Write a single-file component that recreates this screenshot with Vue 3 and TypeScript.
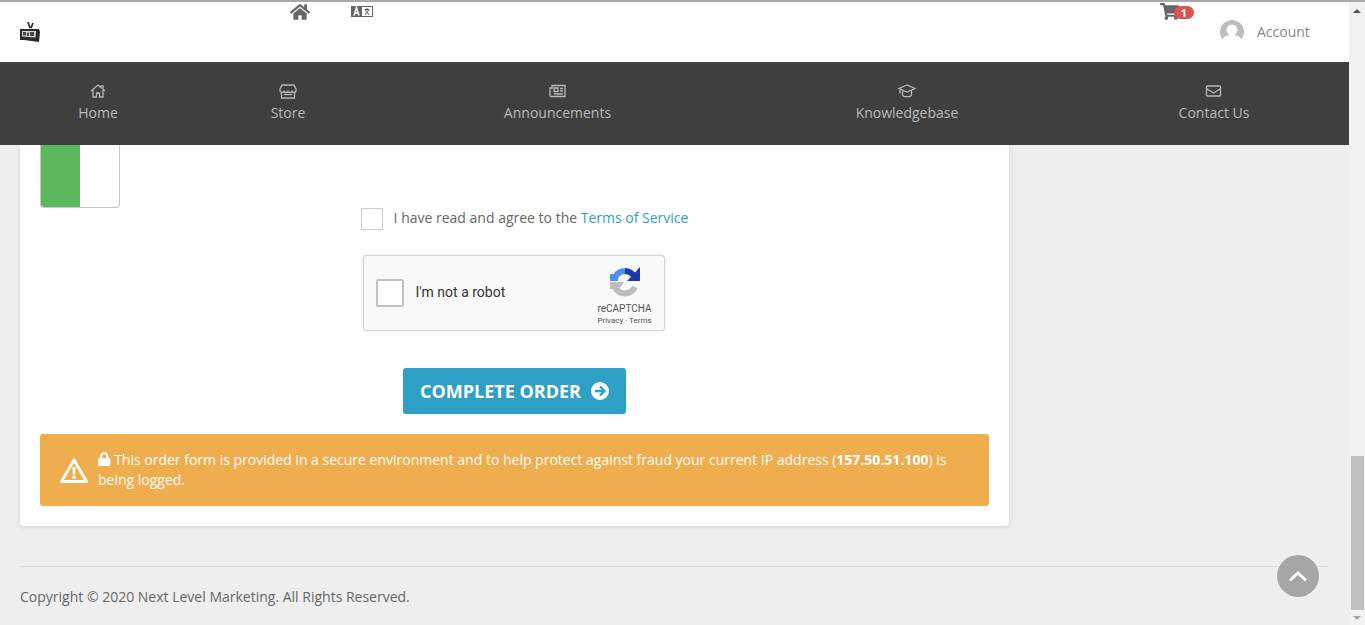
<script setup lang="ts">
interface NavItem { label: string; paths: string[] }
const navItems: NavItem[] = [
  { label: 'Home', paths: ['M2 8 9 2l3 2.600V3h2v3.300L16 8', 'M4 7v7h3.500v-4h3v4H14V7'] },
  { label: 'Store', paths: ['M3 2h12l2 4v1.500a2 2 0 0 1-4 0 2 2 0 0 1-4 0 2 2 0 0 1-4 0 2 2 0 0 1-4 0V6z', 'M2.500 9v6h13V9', 'M5 11.500h8'] },
  { label: 'Announcements', paths: ['M3 2.500h13v11H2a1 1 0 0 1-1-1V5h2z', 'M5 5h4v3.500H5z', 'M11 5.500h3M11 8h3M5 11h9'] },
  { label: 'Knowledgebase', paths: ['M9 2 1 5.500 9 9l8-3.500z', 'M4.500 7.500v4c0 1.200 2 2.200 4.500 2.200s4.500-1 4.500-2.200v-4', 'M2 6.500v4'] },
  { label: 'Contact Us', paths: ['M2.500 3h12a1 1 0 0 1 1 1v8a1 1 0 0 1-1 1h-12a1 1 0 0 1-1-1V4a1 1 0 0 1 1-1z', 'M1.500 5.500 8.500 10l7-4.500'] },
]
</script>

<template>
  <div class="window">
    <div class="page">
      <header class="header">
        <svg class="logo" viewBox="0 0 20 20" aria-hidden="true">
          <path d="M8 0l2 6M13 1l-2 5" fill="none" stroke="#333" stroke-width="1.800" />
          <path d="M0 7l19 0 1 3-1 10-15-2H0z" fill="#2a2a2a" />
          <path d="M2 9h14l-.5 6.500L2 14.500z" fill="#d8d8d8" />
          <path d="M3 10h3v3.500H3zM7 10.500h2v3.500H7zM10 10h4v4h-4z" fill="#444" />
        </svg>
        <svg class="home-icon" viewBox="0 0 576 512" aria-hidden="true">
          <path d="M280.37 148.26L96 300.11V464a16 16 0 0 0 16 16l112.06-.29a16 16 0 0 0 15.92-16V368a16 16 0 0 1 16-16h64a16 16 0 0 1 16 16v95.64a16 16 0 0 0 16 16.05L464 480a16 16 0 0 0 16-16V300L295.67 148.26a12.19 12.19 0 0 0-15.3 0zM571.6 251.47L488 182.56V44.05a12 12 0 0 0-12-12h-56a12 12 0 0 0-12 12v72.61L318.47 43a48 48 0 0 0-61 0L4.34 251.47a12 12 0 0 0-1.6 16.9l25.5 31A12 12 0 0 0 45.15 301l235.22-193.74a12.19 12.19 0 0 1 15.3 0L530.9 301a12 12 0 0 0 16.9-1.6l25.5-31a12 12 0 0 0-1.7-16.93z" />
        </svg>
        <svg class="lang-icon" viewBox="0 0 22 11" aria-hidden="true">
          <rect x="0.500" y="0.500" width="21" height="10" fill="#fff" stroke="#666" />
          <rect x="0" y="0" width="11" height="11" fill="#666" />
          <path d="M3 9.500l2.500-8 2.500 8M3.800 7h3.400" fill="none" stroke="#fff" stroke-width="1.500" />
          <path d="M13.500 3.500h5M16 2v1.500M14.500 3.500c.5 2.500 2 4 4 5M17.500 3.500c-.5 2.500-1.800 4-3.500 5" fill="none" stroke="#555" stroke-width="1" />
        </svg>
        <div class="spacer"></div>
        <div class="cart">
          <svg class="cart-icon" viewBox="0 0 576 512" aria-hidden="true">
            <path d="M528.12 301.319l47.273-208C578.806 78.301 567.391 64 551.99 64H159.208l-9.166-44.81C147.758 8.021 137.93 0 126.529 0H24C10.745 0 0 10.745 0 24v16c0 13.255 10.745 24 24 24h69.883l70.248 343.435C147.325 417.1 136 435.222 136 456c0 30.928 25.072 56 56 56s56-25.072 56-56c0-15.674-6.447-29.835-16.824-40h209.647C430.447 426.165 424 440.326 424 456c0 30.928 25.072 56 56 56s56-25.072 56-56c0-22.172-12.888-41.332-31.579-50.405l5.517-24.276c3.413-15.018-8.002-29.319-23.403-29.319H218.117l-6.545-32h293.145c11.206 0 20.92-7.754 23.403-18.681z" />
          </svg>
          <span class="badge">1</span>
        </div>
        <div class="account">
          <svg class="avatar" viewBox="0 0 24 24" aria-hidden="true">
            <circle cx="12" cy="12" r="12" fill="#bdbdbd" />
            <circle cx="12" cy="10" r="5.500" fill="#fff" />
            <path d="M2.600 19.500C4 16 8 15 12 15s8 1 9.400 4.500L20 24H4z" fill="#fff" />
          </svg>
          <span>Account</span>
        </div>
      </header>

      <nav class="nav">
        <a v-for="item in navItems" :key="item.label" class="nav-item">
          <svg class="nav-icon" viewBox="0 0 18 16" aria-hidden="true">
            <path v-for="d in item.paths" :key="d" :d="d" />
          </svg>
          <span>{{ item.label }}</span>
        </a>
      </nav>

      <main class="main">
        <section class="card">
          <div class="meter"><div class="meter-fill"></div></div>
          <div class="tos">
            <span class="tos-box"></span>
            <span class="tos-label">I have read and agree to the <a class="link">Terms of Service</a></span>
          </div>
          <div class="captcha">
            <span class="captcha-box"></span>
            <span class="captcha-text">I'm not a robot</span>
            <div class="captcha-brand">
              <svg class="captcha-logo" viewBox="0 0 32 32" aria-hidden="true">
                <path d="M16 5a11 11 0 0 0-9.500 5.500" fill="none" stroke="#4a90f5" stroke-width="6" />
                <path d="M1 8h8v7H1z" fill="#4a90f5" />
                <path d="M16 5a11 11 0 0 1 9 5" fill="none" stroke="#1c3aa9" stroke-width="6" />
                <path d="M31 1v14H18z" fill="#1c3aa9" />
                <path d="M5 16a11 11 0 0 0 21 5" fill="none" stroke="#bdbdbd" stroke-width="6" />
                <path d="M1 16h14l-5 7H1z" fill="#bdbdbd" />
              </svg>
              <span class="captcha-name">reCAPTCHA</span>
              <span class="captcha-links">Privacy · Terms</span>
            </div>
          </div>
          <button class="order" type="button">
            <span>Complete Order</span>
            <svg class="order-icon" viewBox="0 0 18 18" aria-hidden="true">
              <circle cx="9" cy="9" r="9" fill="#fff" />
              <path d="M4 9h9M9 4.500 13.500 9 9 13.500" fill="none" stroke="#2ca0c5" stroke-width="2.400" />
            </svg>
          </button>
          <div class="alert">
            <svg class="alert-icon" viewBox="0 0 28 25" aria-hidden="true">
              <path d="M14 2 1.500 23.500h25z" fill="none" stroke="#fff" stroke-width="2.800" stroke-linejoin="round" />
              <path d="M12.400 9h3.200l-.5 7.500h-2.200z" fill="#fff" />
              <circle cx="14" cy="19.300" r="1.800" fill="#fff" />
            </svg>
            <p class="alert-text">
              <svg class="lock" viewBox="0 0 448 512" aria-hidden="true">
                <path d="M400 224h-24v-72C376 68.2 307.8 0 224 0S72 68.2 72 152v72H48c-26.500 0-48 21.500-48 48v192c0 26.500 21.500 48 48 48h352c26.500 0 48-21.500 48-48V272c0-26.500-21.500-48-48-48zm-104 0H152v-72c0-39.700 32.300-72 72-72s72 32.300 72 72v72z" />
              </svg>
              This order form is provided in a secure environment and to help protect against fraud your current IP address (<strong>157.50.51.100</strong>) is being logged.
            </p>
          </div>
        </section>
        <footer class="footer">Copyright © 2020 Next Level Marketing. All Rights Reserved.</footer>
      </main>
      <button class="to-top" type="button" aria-label="Back to top">
        <svg viewBox="0 0 20 12" aria-hidden="true">
          <path d="M2 10.500 10 3l8 7.500" fill="none" stroke="#fff" stroke-width="2.800" />
        </svg>
      </button>
    </div>
    <div class="scrollbar">
      <span class="arrow arrow-up"></span>
      <div class="track"><div class="thumb"></div></div>
      <span class="arrow arrow-down"></span>
    </div>
  </div>
</template>

<style>
html, body { margin: 0; overflow: hidden; }
</style>

<style scoped>
.window {
  display: flex;
  height: 623px;
  border-top: 2px solid #a9a9a9;
  overflow: hidden;
  font-family: "Open Sans", "Liberation Sans", sans-serif;
  font-size: 14px;
  line-height: 20px;
  color: #666;
  background: #eee;
}
.page { position: relative; flex: 1; min-width: 0; display: flex; flex-direction: column; }
.header { height: 60px; flex: none; display: flex; align-items: flex-start; background: #fff; }
.logo { width: 20px; height: 20px; margin: 20px 0 0 20px; }
.home-icon { width: 20px; height: 18px; margin: 1px 0 0 250px; fill: #666; }
.lang-icon { width: 22px; height: 11px; margin: 4px 0 0 41px; }
.spacer { flex: 1; }
.cart { display: flex; align-items: flex-start; margin-right: 26px; }
.cart-icon { width: 19px; height: 17px; margin-top: 1px; fill: #666; }
.badge {
  width: 20px; height: 13px; margin: 4px 0 0 -5px; border-radius: 7px;
  background: #d9534f; color: #fff; font-size: 11px; font-weight: 700;
  line-height: 14px; text-align: center; position: relative;
}
.account { display: flex; align-items: center; gap: 13px; width: 129px; height: 24px; margin-top: 18px; color: #888; }
.avatar { width: 24px; height: 24px; flex: none; }
.nav {
  flex: none; height: 83px; display: grid;
  grid-template-columns: 196px 184px 355px 344px 270px; background: #3f3f3f;
}
.nav-item {
  display: flex; flex-direction: column; align-items: center; padding-top: 21px;
  gap: 4px; color: #b9b9b9; font-size: 14px; line-height: 20px;
}
.nav-icon {
  width: 18px; height: 16px; fill: none; stroke: #b9b9b9; stroke-width: 1.300;
}
.main { flex: 1; padding: 0 20px; min-height: 0; }
.card {
  width: 989px; height: 381px; background: #fff; border-radius: 0 0 4px 4px;
  box-shadow: 0 1px 4px rgba(0,0,0,.12); padding: 0 20px; box-sizing: border-box;
  display: flex; flex-direction: column;
}
.meter {
  width: 80px; height: 63px; box-sizing: border-box; border: 1px solid #c8c8c8;
  border-top: 0; border-radius: 0 0 4px 4px; overflow: hidden; flex: none;
}
.meter-fill { width: 39px; height: 100%; background: #5cb85c; }
.tos { display: flex; align-items: center; justify-content: center; gap: 11px; padding-left: 20px; height: 22px; flex: none; }
.tos-box { width: 20px; height: 20px; border: 1px solid #ccc; background: #fff; flex: none; }
.tos-label { margin-top: -2px; }
.link { color: #2ca0c5; }
.captcha {
  align-self: center; width: 302px; height: 76px; box-sizing: border-box; margin: 25px 2px 0 0; flex: none;
  display: flex; align-items: center; padding-left: 12px; background: #f9f9f9;
  border: 1px solid #d3d3d3; border-radius: 3px; box-shadow: 0 0 4px rgba(0,0,0,.08);
  font-family: Roboto, "Liberation Sans", sans-serif;
}
.captcha-box { width: 28px; height: 28px; box-sizing: border-box; border: 2px solid #c1c1c1; border-radius: 2px; background: #fff; flex: none; }
.captcha-text { margin: -2px 0 0 12px; color: #333; font-size: 14px; }
.captcha-brand { margin: 0 -1px 0 auto; width: 80px; display: flex; flex-direction: column; align-items: center; align-self: flex-start; padding-top: 10px; }
.captcha-logo { width: 32px; height: 32px; }
.captcha-name { font-size: 10px; line-height: 12px; margin-top: 5px; color: #555; }
.captcha-links { font-size: 8px; line-height: 12px; color: #555; }
.order {
  align-self: center; flex: none; width: 223px; height: 46px; margin-top: 37px; border: 0; border-radius: 3px;
  background: #2ca0c5; color: #fff; font-family: inherit; font-size: 18px; font-weight: 700;
  text-transform: uppercase; display: flex; align-items: center; justify-content: center; gap: 10px; padding: 0;
}
.order-icon { width: 18px; height: 18px; }
.alert {
  flex: none; height: 72px; box-sizing: border-box; margin-top: 20px; padding: 16px 20px; display: flex; align-items: center; gap: 10px;
  background: #f0ad4e; border-radius: 3px; color: #fff;
}
.alert-icon { width: 28px; height: 25px; flex: none; }
.alert-text { margin: 0; }
.lock { width: 12.500px; height: 14px; fill: #fff; vertical-align: -1px; }
.footer { margin-top: 40px; border-top: 1px solid #ddd; padding-top: 20px; color: #666; }
.to-top {
  position: absolute; left: 1277px; top: 553px; width: 42px; height: 42px; border: 0; border-radius: 50%;
  background: #a6a6a6; display: flex; align-items: center; justify-content: center; padding: 0;
}
.to-top svg { width: 20px; height: 12px; }
.scrollbar { width: 16px; flex: none; display: flex; flex-direction: column; align-items: center; background: #f1f1f1; }
.arrow { width: 0; height: 0; border-left: 4px solid transparent; border-right: 4px solid transparent; flex: none; }
.arrow-up { border-bottom: 4px solid #505050; margin: 7px 0 5px; }
.arrow-down { border-top: 4px solid #a3a3a3; margin: 6px 0 5px; }
.track { flex: 1; width: 100%; display: flex; align-items: flex-end; justify-content: center; }
.thumb { width: 13px; height: 154px; background: #c1c1c1; margin-left: 1px; }
</style>
